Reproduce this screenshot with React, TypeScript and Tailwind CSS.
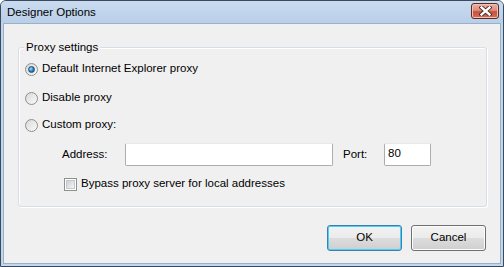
import React from 'react';

const font = { fontFamily: '"Liberation Sans", Arial, sans-serif' };

const Radio = ({ checked }: { checked?: boolean }) => (
  <span className="w-[13px] h-[13px] rounded-full border border-[#8e8f8f] bg-gradient-to-br from-[#d8d8d8] to-[#fbfbfb] flex items-center justify-center shrink-0">
    {checked && (
      <span className="w-[7px] h-[7px] rounded-full bg-[radial-gradient(circle_at_35%_35%,#a6dcf8,#1f77b9_60%,#0d4a85)] border border-[#1b4f7d]" />
    )}
  </span>
);

const Button = ({ label, primary }: { label: string; primary?: boolean }) => (
  <button
    className={
      'w-[75px] h-[26px] rounded-[3px] border text-[11.5px] text-black flex items-center justify-center bg-[linear-gradient(#f2f2f2_0%,#ebebeb_50%,#dddddd_50%,#cfcfcf_100%)] ' +
      (primary ? 'border-[#3c7fb1] shadow-[inset_0_0_0_1px_#48d0f7]' : 'border-[#707070] shadow-[inset_0_0_0_1px_#fcfcfc]')
    }
    style={font}
  >
    {label}
  </button>
);

const App = () => {
  return (
    <div className="w-[504px] h-[267px] border border-[#3a4a5c] rounded-t-[6px] bg-[#c2d6ec] flex flex-col overflow-hidden" style={font}>
      {/* title bar */}
      <div className="h-[22px] flex items-start justify-between bg-gradient-to-b from-[#c9dbef] to-[#b9cfe8]">
        <span className="pl-[6px] pt-[4px] text-[11.5px] leading-[15px] text-black">Designer Options</span>
        <button className="mt-[2px] mr-[4px] w-[28px] h-[16px] rounded-[3px] border border-[#5c2a24] bg-[linear-gradient(#eab0a4_0%,#dc8e80_45%,#c8503c_55%,#d2705a_100%)] shadow-[inset_0_0_0_1px_#f3c0b5] flex items-center justify-center">
          <svg width="13" height="10" viewBox="0 0 13 10">
            <path d="M2.5 1.5 L10.5 8.5 M10.5 1.5 L2.5 8.5" stroke="#4a2520" strokeWidth="4.2" strokeLinecap="square" />
            <path d="M2.5 1.5 L10.5 8.5 M10.5 1.5 L2.5 8.5" stroke="#ffffff" strokeWidth="2.4" strokeLinecap="square" />
          </svg>
        </button>
      </div>

      {/* client area */}
      <div className="flex-1 px-[2px] pb-[2px] flex">
        <div className="flex-1 border border-[#99b0c9] bg-[#f0f0f0] flex flex-col text-[11.5px] text-black">
          <div className="relative mt-[23px] ml-[14px] mr-[13px] h-[160px] border border-[#d5dfe5] rounded-[3px] shadow-[inset_1px_1px_0_#ffffff,1px_1px_0_#ffffff] flex flex-col">
            <span className="absolute -top-[9px] left-[5px] px-[2px] bg-[#f0f0f0] leading-[16px]">Proxy settings</span>

            <div className="mt-[11px] ml-[6px] h-[20px] flex items-center gap-[4px]">
              <Radio checked />
              <span>Default Internet Explorer proxy</span>
            </div>
            <div className="mt-[9px] ml-[6px] h-[20px] flex items-center gap-[4px]">
              <Radio />
              <span>Disable proxy</span>
            </div>
            <div className="mt-[7px] ml-[6px] h-[20px] flex items-center gap-[4px]">
              <Radio />
              <span>Custom proxy:</span>
            </div>

            <div className="mt-[8px] ml-[43px] h-[23px] flex items-center">
              <span className="w-[63px]">Address:</span>
              <input
                className="w-[208px] h-[23px] bg-white border border-[#abadb3] border-t-[#e3e9ef] rounded-[2px] outline-none px-[3px] text-[11.5px]"
                style={font}
              />
              <span className="ml-[10px] w-[41px]">Port:</span>
              <input
                defaultValue="80"
                className="w-[47px] h-[23px] bg-white border border-[#abadb3] border-t-[#e3e9ef] rounded-[2px] outline-none px-[3px] pb-[4px] text-[11.5px]"
                style={font}
              />
            </div>

            <div className="mt-[8px] ml-[45px] h-[20px] flex items-center gap-[4px]">
              <span className="w-[13px] h-[13px] border border-[#8e8f8f] bg-white flex items-center justify-center">
                <span className="w-[9px] h-[9px] bg-gradient-to-br from-[#cbcfd5] to-[#f6f6f6] border border-[#c4c7cc]" />
              </span>
              <span>Bypass proxy server for local addresses</span>
            </div>
          </div>

          <div className="mt-[18px] mr-[14px] flex justify-end gap-[9px]">
            <Button label="OK" primary />
            <Button label="Cancel" />
          </div>
        </div>
      </div>
    </div>
  );
};

export default App;
